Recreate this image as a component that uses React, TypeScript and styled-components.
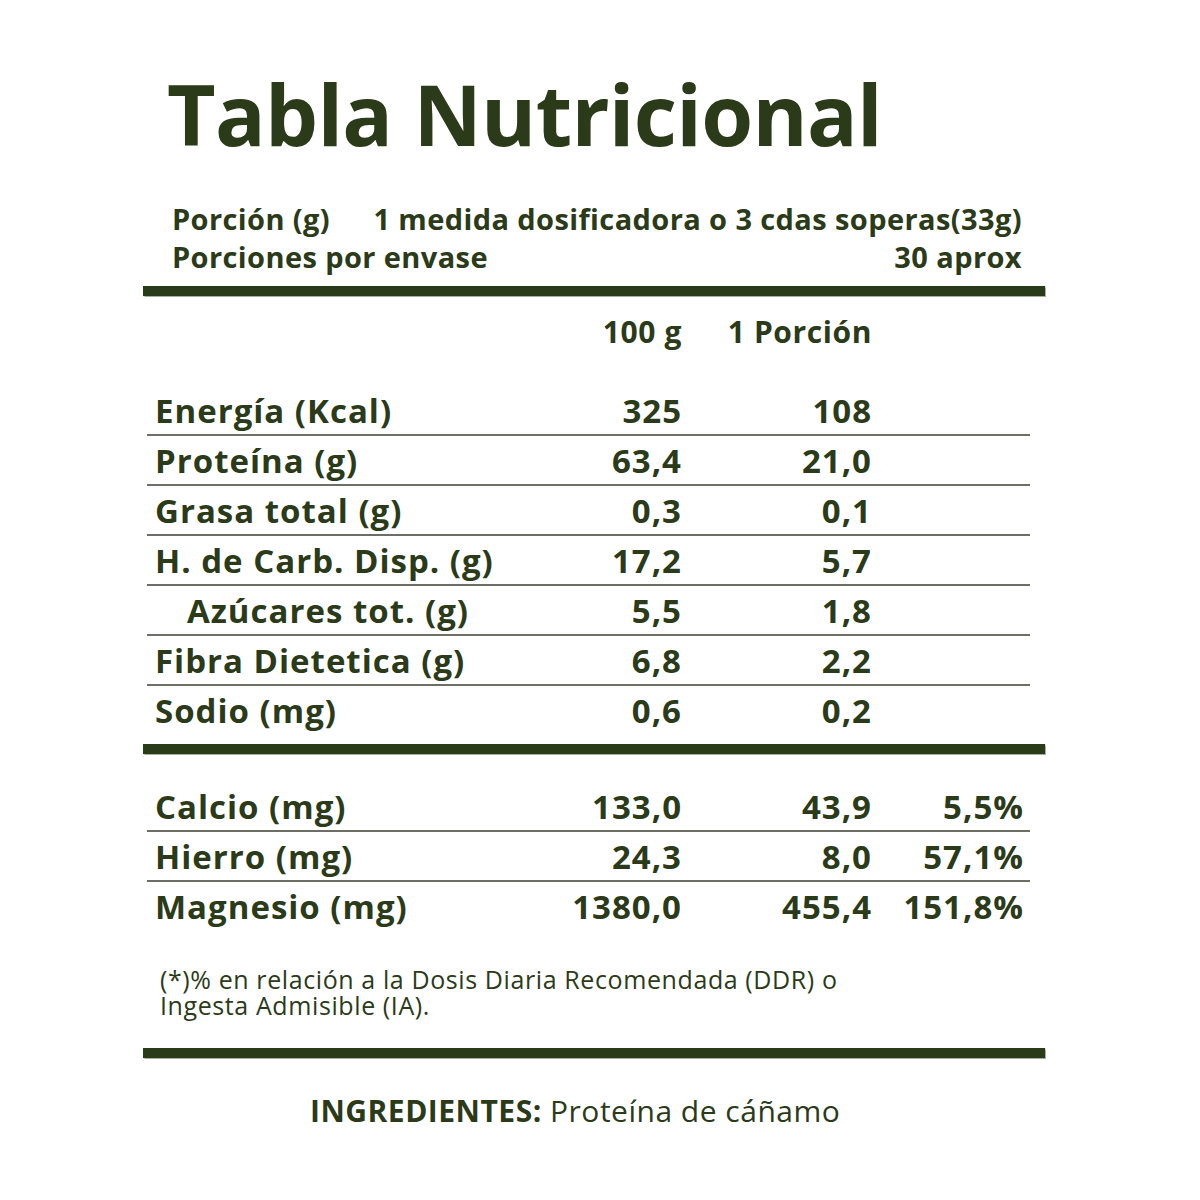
import React from "react";
import styled, { createGlobalStyle } from "styled-components";

const INK = "#2b3a19";
const RULE = "#293b18";
const THIN = "#6d6f66";

const Global = createGlobalStyle`
  html, body { margin: 0; padding: 0; background: #ffffff; }
  body { font-family: "Open Sans", "Liberation Sans", sans-serif; color: ${INK}; }
`;

const Page = styled.div`
  width: 1200px;
  height: 1200px;
  background: #fff;
  box-sizing: border-box;
  padding: 64px 155px 0 143px;
  display: flex;
  flex-direction: column;
`;

const Title = styled.h1`
  margin: 0 0 0 24px;
  font-size: 84px;
  line-height: 100px;
  font-weight: 700;
  letter-spacing: -0.7px;
  color: ${INK};
  white-space: nowrap;
`;

const Serving = styled.div`
  margin: 36px 0 0 29px;
  width: 850px;
  display: flex;
  flex-direction: column;
  font-size: 29px;
  line-height: 38px;
  font-weight: 700;
  letter-spacing: 0.4px;
`;

const ServingLine = styled.div`
  display: flex;
  justify-content: space-between;
  height: 38px;
  white-space: nowrap;
`;

const ServingLabel = styled.span``;
const ServingValue = styled.span``;

const Rule = styled.div<{ $top: number }>`
  margin-top: ${(p) => p.$top}px;
  height: 10px;
  width: 902px;
  background: ${RULE};
  box-shadow: 0 0 1px 0.5px rgba(60, 80, 40, 0.45);
`;

const Table = styled.div`
  width: 883px;
  margin-left: 4px;
  display: flex;
  flex-direction: column;
`;

const Row = styled.div<{ $line?: boolean; $h?: number }>`
  display: grid;
  grid-template-columns: 366px 160px 190px 152px;
  padding: 0 7px 0 8px;
  height: ${(p) => p.$h ?? 48}px;
  align-items: center;
  border-bottom: ${(p) => (p.$line ? `2px solid ${THIN}` : "none")};
  font-size: 33px;
  font-weight: 700;
  letter-spacing: 1px;
  color: ${INK};
`;

const HeadRow = styled(Row)`
  font-size: 30px;
  letter-spacing: 0.6px;
`;

const Label = styled.span<{ $indent?: boolean }>`
  padding-left: ${(p) => (p.$indent ? 32 : 0)}px;
  white-space: nowrap;
`;

const Num = styled.span`
  text-align: right;
  white-space: nowrap;
  margin-right: -1px;
`;

const Gap = styled.div<{ $h: number }>`
  height: ${(p) => p.$h}px;
`;

const Footnote = styled.p`
  margin: 36px 0 0 17px;
  font-size: 25px;
  line-height: 26px;
  font-weight: 400;
  letter-spacing: 0.6px;
  color: ${INK};
  white-space: nowrap;
`;

const Ingredients = styled.p`
  margin: 36px 0 0 167px;
  font-size: 30px;
  line-height: 34px;
  font-weight: 400;
  letter-spacing: 0.5px;
  color: ${INK};
  white-space: nowrap;
`;

const Strong = styled.b`
  font-weight: 700;
`;

const macros: [string, string, string, boolean?][] = [
  ["Energía (Kcal)", "325", "108"],
  ["Proteína (g)", "63,4", "21,0"],
  ["Grasa total (g)", "0,3", "0,1"],
  ["H. de Carb. Disp. (g)", "17,2", "5,7"],
  ["Azúcares tot. (g)", "5,5", "1,8", true],
  ["Fibra Dietetica (g)", "6,8", "2,2"],
  ["Sodio (mg)", "0,6", "0,2"],
];

const minerals: [string, string, string, string][] = [
  ["Calcio (mg)", "133,0", "43,9", "5,5%"],
  ["Hierro (mg)", "24,3", "8,0", "57,1%"],
  ["Magnesio (mg)", "1380,0", "455,4", "151,8%"],
];

export default function App() {
  return (
    <>
      <Global />
      <Page>
        <Title>Tabla Nutricional</Title>
        <Serving>
          <ServingLine>
            <ServingLabel>Porción (g)</ServingLabel>
            <ServingValue>1 medida dosificadora o 3 cdas soperas(33g)</ServingValue>
          </ServingLine>
          <ServingLine>
            <ServingLabel>Porciones por envase</ServingLabel>
            <ServingValue>30 aprox</ServingValue>
          </ServingLine>
        </Serving>
        <Rule $top={10} />
        <Table>
          <HeadRow $h={70}>
            <Label />
            <Num>100 g</Num>
            <Num>1 Porción</Num>
            <Num />
          </HeadRow>
          <Gap $h={20} />
          {macros.map(([l, a, b, indent], i) => (
            <Row key={l} $line={i < macros.length - 1}>
              <Label $indent={indent}>{l}</Label>
              <Num>{a}</Num>
              <Num>{b}</Num>
              <Num />
            </Row>
          ))}
        </Table>
        <Rule $top={10} />
        <Table>
          <Gap $h={28} />
          {minerals.map(([l, a, b, c], i) => (
            <Row key={l} $line={i < minerals.length - 1}>
              <Label>{l}</Label>
              <Num>{a}</Num>
              <Num>{b}</Num>
              <Num>{c}</Num>
            </Row>
          ))}
        </Table>
        <Footnote>
          (*)% en relación a la Dosis Diaria Recomendada (DDR) o
          <br />
          Ingesta Admisible (IA).
        </Footnote>
        <Rule $top={30} />
        <Ingredients>
          <Strong>INGREDIENTES:</Strong> Proteína de cáñamo
        </Ingredients>
      </Page>
    </>
  );
}
